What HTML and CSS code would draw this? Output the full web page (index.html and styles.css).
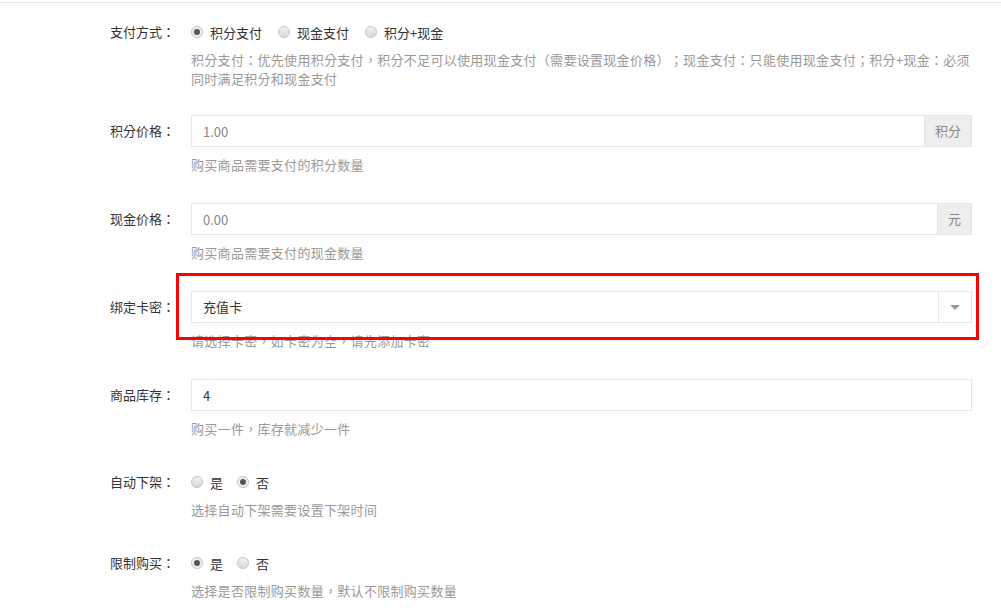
FILE: index.html
```html
<!DOCTYPE html>
<html lang="zh-CN">
<head>
    <meta charset="UTF-8">
    <title>商品设置</title>
    <link rel="stylesheet" href="styles.css">
</head>
<body>

    <!-- 表单 -->
    <div class="form">

        <div class="form-item">
            <label class="form-label" lang="zh-TW">支付方式：</label>
            <div class="form-block">
                <div class="radio-row">
                    <span class="radio checked"></span><span class="radio-text">积分支付</span>
                    <span class="radio"></span><span class="radio-text">现金支付</span>
                    <span class="radio"></span><span class="radio-text">积分+现金</span>
                </div>
                <p class="help help-radio" lang="zh-TW">积分支付：优先使用积分支付，积分不足可以使用现金支付（需要设置现金价格）；现金支付：只能使用现金支付；积分+现金：必须同时满足积分和现金支付</p>
            </div>
        </div>

        <div class="form-item">
            <label class="form-label" lang="zh-TW">积分价格：</label>
            <div class="form-block">
                <div class="input-group">
                    <input class="input muted" type="text" value="1.00">
                    <span class="addon">积分</span>
                </div>
                <p class="help">购买商品需要支付的积分数量</p>
            </div>
        </div>

        <div class="form-item">
            <label class="form-label" lang="zh-TW">现金价格：</label>
            <div class="form-block">
                <div class="input-group">
                    <input class="input muted" type="text" value="0.00">
                    <span class="addon addon-small">元</span>
                </div>
                <p class="help">购买商品需要支付的现金数量</p>
            </div>
        </div>

        <div class="form-item marked">
            <label class="form-label" lang="zh-TW">绑定卡密：</label>
            <div class="form-block">
                <div class="select">
                    <span class="select-value">充值卡</span>
                    <span class="select-arrow"></span>
                </div>
                <p class="help" lang="zh-TW">请选择卡密，如卡密为空，请先添加卡密</p>
            </div>
            <!-- 标注框 -->
            <div class="mark"></div>
        </div>

        <div class="form-item">
            <label class="form-label" lang="zh-TW">商品库存：</label>
            <div class="form-block">
                <input class="input" type="text" value="4">
                <p class="help" lang="zh-TW">购买一件，库存就减少一件</p>
            </div>
        </div>

        <div class="form-item radio-item">
            <label class="form-label" lang="zh-TW">自动下架：</label>
            <div class="form-block">
                <div class="radio-row">
                    <span class="radio"></span><span class="radio-text short">是</span>
                    <span class="radio checked"></span><span class="radio-text short">否</span>
                </div>
                <p class="help help-radio">选择自动下架需要设置下架时间</p>
            </div>
        </div>

        <div class="form-item radio-item">
            <label class="form-label" lang="zh-TW">限制购买：</label>
            <div class="form-block">
                <div class="radio-row">
                    <span class="radio checked"></span><span class="radio-text short">是</span>
                    <span class="radio"></span><span class="radio-text short">否</span>
                </div>
                <p class="help help-radio" lang="zh-TW">选择是否限制购买数量，默认不限制购买数量</p>
            </div>
        </div>

    </div>

</body>
</html>
```

FILE: styles.css
```css
body, html {
    margin: 0;
    padding: 0;
    background-color: #fff;
    font-family: "Microsoft YaHei", "Noto Sans CJK SC", sans-serif;
    font-size: 13px;
    color: #333;
}

body {
    padding-top: 2px;
}

.form {
    border-top: 1px solid #e6e6e6;
    padding: 14px 29px 0 110px;
    text-spacing-trim: space-all;
}

.form-item {
    display: flex;
    margin-bottom: 29px;
}

.form-item:first-child {
    margin-bottom: 27px;
}

/* 标签和提示用居中的标点 */
.form-label,
.help {
    font-family: "Microsoft YaHei", "Noto Sans CJK TC", sans-serif;
}

.form-label {
    width: 70px;
    margin-right: 11px;
    line-height: 32px;
    white-space: nowrap;
}

.form-item:first-child .form-label,
.radio-item .form-label {
    line-height: 30px;
}

.form-block {
    flex: 1;
}

/* 单选 */
.radio-row {
    display: flex;
    align-items: center;
    height: 30px;
}

.radio {
    position: relative;
    width: 10px;
    height: 10px;
    border: 1px solid #c4c4c4;
    border-radius: 50%;
    background: linear-gradient(#f2f2f2, #d8d8d8);
    margin-right: 7px;
}

.radio.checked {
    background: #eee;
}

.radio.checked::after {
    content: "";
    position: absolute;
    top: 2px;
    left: 2px;
    width: 6px;
    height: 6px;
    border-radius: 50%;
    background: #555;
}

.radio-text {
    margin-right: 16px;
}

.radio-text.short {
    margin-right: 14px;
}

/* 提示文字 */
.help {
    margin: 8px 0 0;
    color: #999;
    line-height: 19px;
    letter-spacing: 0.3px;
}

.help-radio {
    margin-top: 3px;
}

/* 输入框 */
.input {
    display: block;
    box-sizing: border-box;
    width: 100%;
    height: 32px;
    margin: 0;
    padding: 0 11px;
    border: 1px solid #e6e6e6;
    font-family: inherit;
    font-size: 13px;
    color: #333;
    outline: none;
}

.input.muted {
    color: #888;
}

.input-group {
    display: flex;
}

.input-group .input {
    flex: 1;
}

.addon {
    box-sizing: border-box;
    width: 47px;
    height: 32px;
    line-height: 30px;
    text-align: center;
    background: #eee;
    border: 1px solid #e6e6e6;
    border-left: 0;
    color: #888;
}

.addon-small {
    width: 34px;
}

/* 下拉框 */
.select {
    display: flex;
    box-sizing: border-box;
    height: 32px;
    border: 1px solid #e6e6e6;
}

.select-value {
    flex: 1;
    padding-left: 11px;
    line-height: 30px;
}

.select-arrow {
    position: relative;
    width: 32px;
    border-left: 1px solid #e6e6e6;
}

.select-arrow::after {
    content: "";
    position: absolute;
    top: 13px;
    left: 11px;
    border-left: 5px solid transparent;
    border-right: 5px solid transparent;
    border-top: 5px solid #999;
}

/* 红色标注 */
.marked {
    position: relative;
}

.mark {
    position: absolute;
    top: -18px;
    left: 66px;
    right: -7px;
    height: 61px;
    border: 3px solid #f00;
}
```
